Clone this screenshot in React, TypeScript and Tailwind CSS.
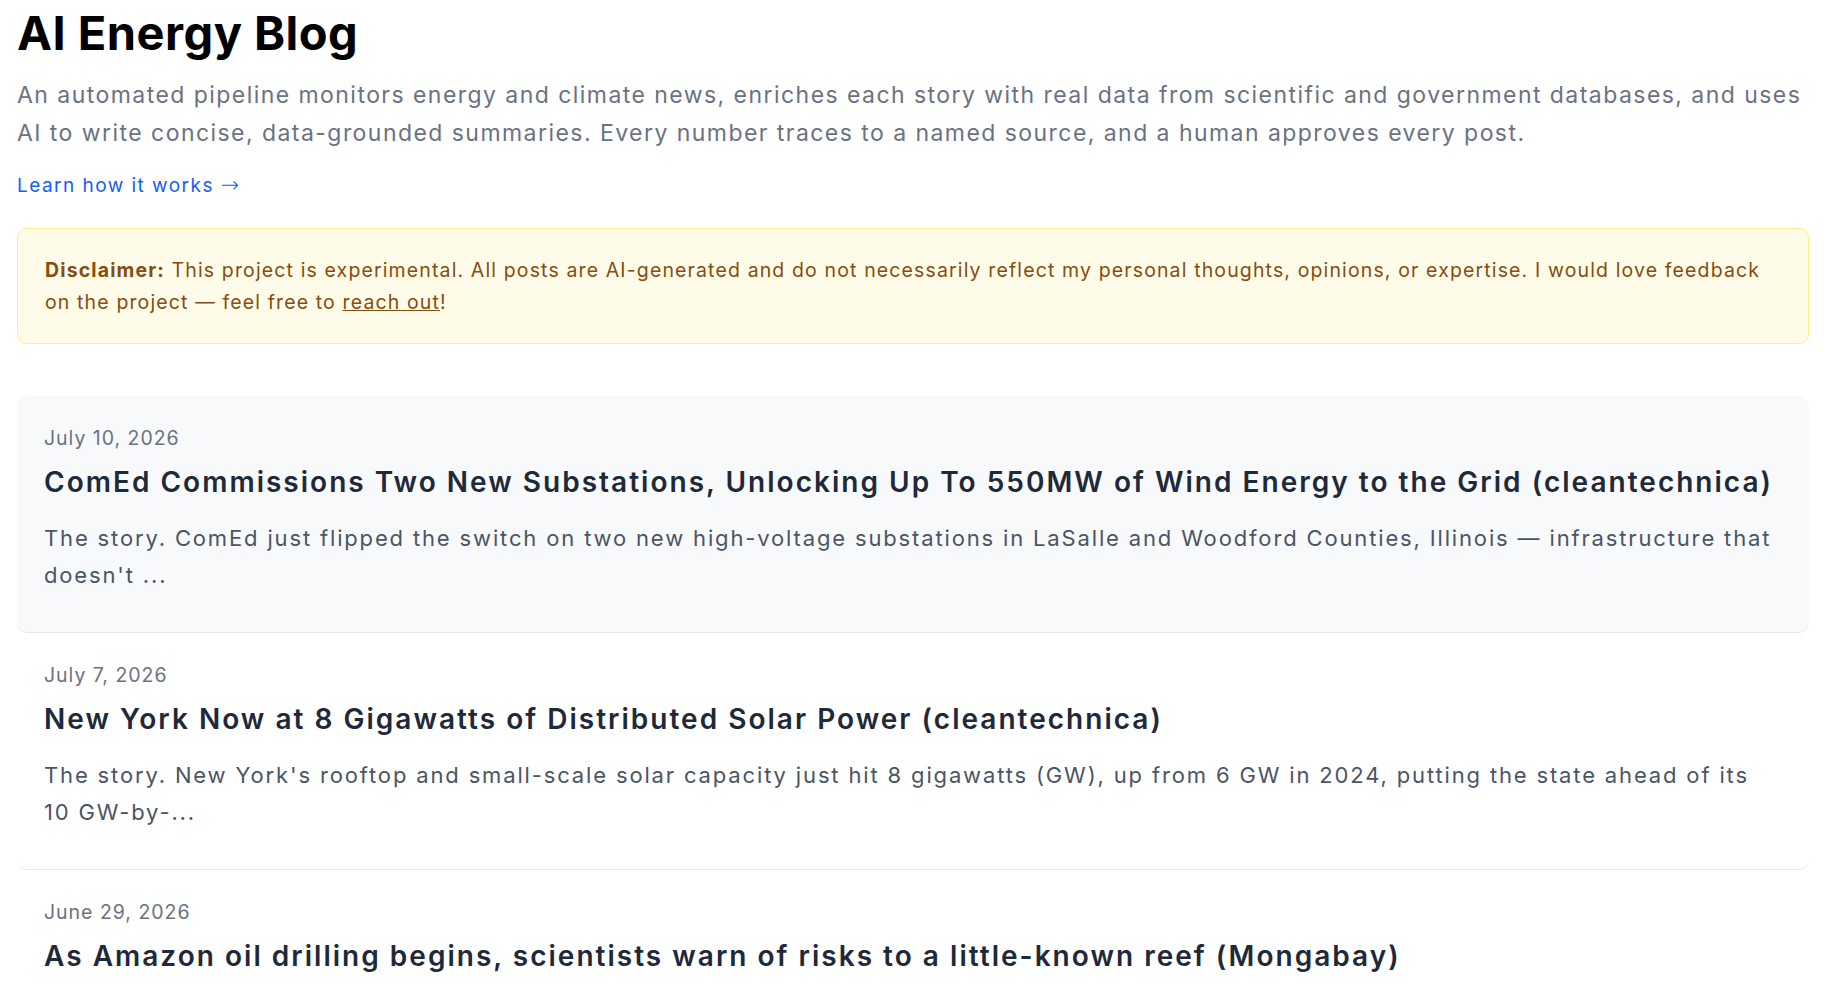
const posts = [
  {
    date: "July 10, 2026",
    title:
      "ComEd Commissions Two New Substations, Unlocking Up To 550MW of Wind Energy to the Grid (cleantechnica)",
    excerpt:
      "The story. ComEd just flipped the switch on two new high-voltage substations in LaSalle and Woodford Counties, Illinois — infrastructure that doesn't ...",
    active: true,
  },
  {
    date: "July 7, 2026",
    title: "New York Now at 8 Gigawatts of Distributed Solar Power (cleantechnica)",
    excerpt:
      "The story. New York's rooftop and small-scale solar capacity just hit 8 gigawatts (GW), up from 6 GW in 2024, putting the state ahead of its 10 GW-by-...",
    active: false,
  },
  {
    date: "June 29, 2026",
    title:
      "As Amazon oil drilling begins, scientists warn of risks to a little-known reef (Mongabay)",
    excerpt:
      "The story. Drilling has started near the mouth of the Amazon, close to a reef system that scientists only mapped in 2016 ...",
    active: false,
  },
];

const PostCard = ({ post }: { post: (typeof posts)[number] }) => (
  <a
    href="#"
    className={`block rounded-[10px] border-b border-gray-200 px-[27px] pt-[28px] pb-[38px] ${
      post.active ? "bg-[#f8f9fb]" : "bg-white"
    }`}
  >
    <div className="text-[19.5px] leading-[29px] tracking-[0.05em] text-gray-500">
      {post.date}
    </div>
    <h2 className="mt-[11px] text-[28px] leading-[37px] font-semibold tracking-[0.072em] text-gray-800">
      {post.title}
    </h2>
    <p className="mt-[19px] text-[22px] leading-[37px] tracking-[0.084em] text-gray-600">
      {post.excerpt}
    </p>
  </a>
);

export default function App() {
  return (
    <div className="min-h-screen bg-white font-['Inter',sans-serif]">
      <main className="pl-[17px] pr-[33px] pt-[5px]">
        <h1 className="text-[47px] leading-[56px] font-bold tracking-[0.01em] text-black">
          AI Energy Blog
        </h1>
        <p className="mt-[15px] text-[23px] leading-[38px] tracking-[0.063em] text-gray-500">
          An automated pipeline monitors energy and climate news, enriches each story with real
          data from scientific and government databases, and uses AI to write concise,
          data-grounded summaries. Every number traces to a named source, and a human approves
          every post.
        </p>
        <div className="mt-[20px] h-[28px]">
          <a href="#" className="text-[19px] leading-[28px] tracking-[0.077em] text-blue-600">
            Learn how it works{" "}
            <span className="font-['DejaVu_Sans',sans-serif] text-[22px] leading-[0] font-extralight tracking-normal">
              →
            </span>
          </a>
        </div>

        <div className="mt-[28px] rounded-[10px] border border-yellow-200 bg-[#fefce8] px-[27px] py-[25px] text-[19.5px] leading-[32px] tracking-[0.058em] text-[#854d0e]">
          <strong className="font-bold">Disclaimer:</strong> This project is experimental. All
          posts are AI-generated and do not necessarily reflect my personal thoughts, opinions, or
          expertise. I would love feedback on the project — feel free to{" "}
          <a href="#" className="underline">
            reach out
          </a>
          !
        </div>

        <div className="mt-[52px] flex flex-col">
          {posts.map((post) => (
            <PostCard key={post.date} post={post} />
          ))}
        </div>
      </main>
    </div>
  );
}
